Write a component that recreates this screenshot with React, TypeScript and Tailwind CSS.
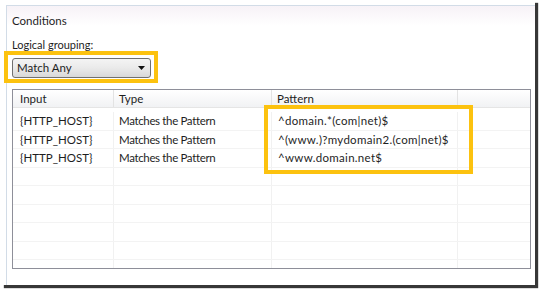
import React from "react";

const rows = [
  ["{HTTP_HOST}", "Matches the Pattern", "^domain.*(com|net)$"],
  ["{HTTP_HOST}", "Matches the Pattern", "^(www.)?mydomain2.(com|net)$"],
  ["{HTTP_HOST}", "Matches the Pattern", "^www.domain.net$"],
  ["", "", ""],
  ["", "", ""],
  ["", "", ""],
  ["", "", ""],
  ["", "", ""],
  ["", "", ""],
];

export default function App() {
  return (
    <div
      className="relative w-[540px] h-[290px] bg-white overflow-hidden text-[11.5px] text-[#1e1e1e] whitespace-nowrap"
      style={{ fontFamily: 'Lato, "Noto Sans", sans-serif' }}
    >
      <div className="ml-[1px] w-[534px] h-[285px] bg-white pl-[5px] pt-[5px] shadow-[3px_3px_1px_rgba(20,20,20,0.85)]">
        <div className="h-full border-l border-t border-[#d2dce7] flex flex-col">
          <div className="h-[20px] pl-[5px] flex items-center bg-gradient-to-b from-[#f7f2f7] to-white text-[11.5px] leading-none pt-[10px]">
            Conditions
          </div>
          <div className="pl-[5px] mt-[13px] leading-none h-[14px] text-[11px]">Logical grouping:</div>
          <div className="ml-[5px] mt-[5px] w-[139px] h-[20px] rounded-[3px] border border-[#707070] bg-gradient-to-b from-[#f4f4f4] via-[#eaeaea] to-[#d8d8d8] flex items-center justify-between pl-[4px] pr-[5px]">
            <span className="leading-none">Match Any</span>
            <svg width="7" height="4" viewBox="0 0 7 4">
              <path d="M0 0 L7 0 L3.5 4 Z" fill="#111" />
            </svg>
          </div>
          <div className="ml-[5px] mt-[11px] w-[519px] h-[180px] border border-[#8e8f99] overflow-hidden flex flex-col">
            <div className="h-[18px] shrink-0 flex bg-gradient-to-b from-white to-[#f1f2f4] border-b border-[#e5e5e5]">
              <div className="w-[101px] pl-[7px] border-r border-[#e3e3e3] flex items-center">Input</div>
              <div className="w-[158px] pl-[5px] border-r border-[#e3e3e3] flex items-center">Type</div>
              <div className="w-[186px] pl-[5px] border-r border-[#e3e3e3] flex items-center">Pattern</div>
              <div className="flex-1" />
            </div>
            <div className="pt-[4px] flex flex-col">
              {rows.map((r, i) => (
                <div key={i} className="h-[18.5px] shrink-0 flex border-b border-[#f3f3f3]">
                  <div className="w-[101px] pl-[7px] border-r border-[#f1f1f1] flex items-center">{r[0]}</div>
                  <div className="w-[158px] pl-[5px] border-r border-[#f1f1f1] flex items-center tracking-[-0.35px]">{r[1]}</div>
                  <div className="w-[186px] pl-[6px] border-r border-[#f1f1f1] flex items-center tracking-[0.3px]">{r[2]}</div>
                  <div className="flex-1" />
                </div>
              ))}
            </div>
          </div>
        </div>
      </div>
      <div className="absolute left-[4px] top-[51px] w-[154px] h-[32px] border-[4px] border-[#fcc20f]" />
      <div className="absolute left-[264px] top-[105px] w-[209px] h-[69px] border-[4px] border-[#fcc20f]" />
    </div>
  );
}
